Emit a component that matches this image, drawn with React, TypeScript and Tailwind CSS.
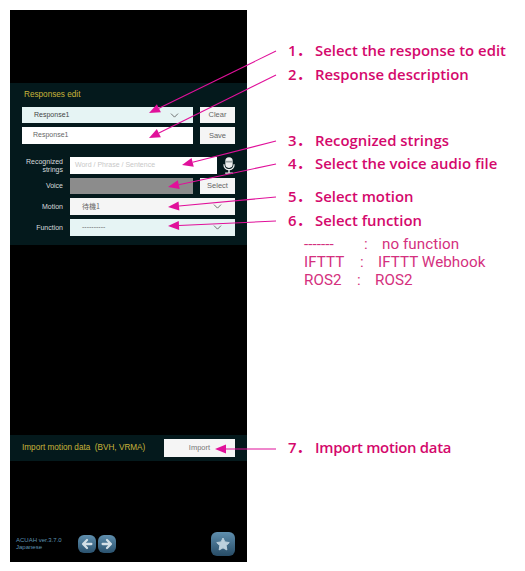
import { ChevronDown } from 'lucide-react';

const SANS = "font-['Liberation_Sans',Arial,sans-serif]";
const NOTE = "font-['Open_Sans','Noto_Sans_CJK_JP',sans-serif]";

function Chevron({ className = '' }: { className?: string }) {
  return <ChevronDown className={`w-[13px] h-[13px] text-[#555] ${className}`} strokeWidth={1.5} />;
}

function SideButton({ label }: { label: string }) {
  return (
    <button className="w-[35px] h-full bg-[#f5f5f5] text-[#666] text-[7.5px] flex items-center justify-center">
      {label}
    </button>
  );
}

function FieldLabel({ children }: { children: React.ReactNode }) {
  return (
    <div className="w-[41px] mr-[7px] text-right text-[7px] leading-[8px] text-[#d8dcdc]">{children}</div>
  );
}

function Note({ num, text, className = '' }: { num: string; text: string; className?: string }) {
  return (
    <div className={`flex items-center h-[20px] text-[14.9px] leading-[20px] font-semibold text-[#d4086c] whitespace-nowrap ${className}`}>
      <span className="w-[27px]">{num}．</span>
      <span>{text}</span>
    </div>
  );
}

function FunctionRow({ left, right, gap }: { left: string; right: string; gap: string }) {
  return (
    <div className="flex items-center h-[18px] font-['Roboto',sans-serif] text-[15.2px] leading-[18px] tracking-[0.05px] text-[#d4307e] whitespace-nowrap">
      <span className={gap}>{left}</span>
      <span className="w-[18px]">:</span>
      <span>{right}</span>
    </div>
  );
}

function NavButton({ dir }: { dir: 'left' | 'right' }) {
  return (
    <div className="w-[18px] h-[18px] rounded-[6px] bg-gradient-to-b from-[#5f8fae] to-[#2b526e] flex items-center justify-center">
      <svg viewBox="0 0 16 16" className="w-[14px] h-[14px]">
        <path
          d={dir === 'left' ? 'M13 8H4M8 3.5 3.5 8 8 12.5' : 'M3 8h9M8 3.5 12.5 8 8 12.5'}
          fill="none"
          stroke="#d3dfe6"
          strokeWidth="2.6"
          strokeLinecap="round"
          strokeLinejoin="round"
        />
      </svg>
    </div>
  );
}

const ARROWS: [number, number, number, number][] = [
  [276, 51, 149, 113],
  [276, 75, 149, 138],
  [276, 141, 182, 165],
  [276, 164, 168, 187],
  [276, 197, 168, 207],
  [276, 221, 168, 226],
  [276, 449, 215, 449],
];

function Arrow({ line }: { line: [number, number, number, number] }) {
  const [x1, y1, x2, y2] = line;
  const a = Math.atan2(y1 - y2, x1 - x2);
  const len = 11;
  const w = 4.5;
  const bx = x2 + Math.cos(a) * len;
  const by = y2 + Math.sin(a) * len;
  const px = -Math.sin(a) * w;
  const py = Math.cos(a) * w;
  return (
    <g>
      <line x1={x1} y1={y1} x2={bx} y2={by} stroke="#e0109a" strokeWidth="1.1" />
      <polygon points={`${x2},${y2} ${bx + px},${by + py} ${bx - px},${by - py}`} fill="#e0109a" />
    </g>
  );
}

export default function App() {
  return (
    <div className={`relative w-[525px] h-[571px] bg-white flex overflow-hidden ${SANS}`}>
      <div className="ml-[10px] mt-[10px] w-[237px] h-[552px] bg-black flex flex-col">
        <div className="mt-[73px] h-[162px] bg-[#04191c] pl-[12px] pr-[12px] flex flex-col">
          <div className="mt-[6px] h-[11px] ml-[2px] text-[8.2px] leading-[11px] text-[#c8b43a]">Responses edit</div>
          <div className="mt-[7px] h-[16px] flex gap-[7px]">
            <div className="w-[171px] h-full bg-[#e6f4f4] flex items-center pl-[12px] pr-[12px] text-[7px] text-[#444]">
              <span className="flex-1">Response1</span>
              <Chevron />
            </div>
            <SideButton label="Clear" />
          </div>
          <div className="mt-[4px] h-[17px] flex gap-[7px]">
            <div className="w-[171px] h-full bg-white flex items-center pl-[11px] text-[7px] text-[#666]">Response1</div>
            <SideButton label="Save" />
          </div>
          <div className="mt-[13px] h-[17px] flex items-center">
            <FieldLabel>
              Recognized
              <br />
              strings
            </FieldLabel>
            <div className="w-[147px] h-full bg-white flex items-center pl-[5px] text-[7px] text-[#c8c8c8]">
              Word / Phrase / Sentence
            </div>
            <svg viewBox="0 0 14 20" className="ml-[6px] w-[12px] h-[17px]">
              <rect x="2.7" y="0.3" width="8.6" height="12.5" rx="4.2" fill="#eef0f0" />
              <rect x="2.7" y="4.5" width="8.6" height="2" fill="#9aa3a3" />
              <path d="M1 8.500c0 4 2.700 6.400 6 6.400s6-2.400 6-6.400" fill="none" stroke="#eef0f0" strokeWidth="1.5" />
              <path d="M7 14.700V18.500M2.500 19h9" stroke="#eef0f0" strokeWidth="1.6" />
            </svg>
          </div>
          <div className="mt-[4px] h-[16px] flex items-center">
            <FieldLabel>Voice</FieldLabel>
            <div className="w-[123px] h-full bg-[#8c8c8c]" />
            <div className="ml-[7px] h-full">
              <SideButton label="Select" />
            </div>
          </div>
          <div className="mt-[4px] h-[17px] flex items-center">
            <FieldLabel>Motion</FieldLabel>
            <div className="w-[165px] h-full bg-[#f5f5f5] flex items-center pl-[12px] pr-[11px] text-[7px] text-[#666] font-['Noto_Sans_CJK_JP',sans-serif]">
              <span className="flex-1">待機1</span>
              <Chevron />
            </div>
          </div>
          <div className="mt-[4px] h-[17px] flex items-center">
            <FieldLabel>Function</FieldLabel>
            <div className="w-[165px] h-full bg-[#e6f4f4] flex items-center pl-[12px] pr-[11px] text-[7px] text-[#666]">
              <span className="flex-1">----------</span>
              <Chevron />
            </div>
          </div>
        </div>
        <div className="mt-[190px] h-[26px] bg-[#04191c] pl-[12px] pr-[12px] flex items-center justify-between">
          <span className="text-[8.2px] text-[#c8b43a] whitespace-pre">Import motion data  (BVH, VRMA)</span>
          <button className="w-[71px] h-[18px] bg-[#f5f5f5] text-[#777] text-[7.5px]">Import</button>
        </div>
        <div className="mt-[71px] flex items-center pl-[6px] pr-[12px]">
          <div className="w-[62px] text-[6px] leading-[7px] text-[#5f94b3]">
            ACUAH ver.3.7.0
            <br />
            Japanese
          </div>
          <div className="flex gap-[2px]">
            <NavButton dir="left" />
            <NavButton dir="right" />
          </div>
          <div className="ml-auto w-[24px] h-[24px] rounded-[6px] bg-gradient-to-b from-[#5f8fae] to-[#284c66] flex items-center justify-center">
            <svg viewBox="0 0 24 24" className="w-[16px] h-[16px]">
              <path
                d="M12 3l2.9 5.9 6.5.9-4.7 4.6 1.1 6.5L12 17.8 6.2 20.9l1.1-6.5L2.600 9.800l6.500-.9z"
                fill="#bcd0dc"
                stroke="#bcd0dc"
                strokeWidth="1.5"
                strokeLinejoin="round"
              />
            </svg>
          </div>
        </div>
      </div>

      <div className={`ml-[41px] pt-[40px] flex flex-col ${NOTE}`}>
        <Note num="1" text="Select the response to edit" />
        <Note num="2" text="Response description" className="mt-[4px]" />
        <Note num="3" text="Recognized strings" className="mt-[46px]" />
        <Note num="4" text="Select the voice audio file" className="mt-[3px]" />
        <Note num="5" text="Select motion" className="mt-[13px]" />
        <Note num="6" text="Select function" className="mt-[4px]" />
        <div className="ml-[16px] mt-[5px] flex flex-col">
          <FunctionRow left="-------" right="no function" gap="w-[60px]" />
          <FunctionRow left="IFTTT" right="IFTTT Webhook" gap="w-[56px]" />
          <FunctionRow left="ROS2" right="ROS2" gap="w-[53px]" />
        </div>
        <Note num="7" text="Import motion data" className="mt-[148px] tracking-[-0.3px]" />
      </div>

      <svg className="absolute inset-0 w-[525px] h-[571px] pointer-events-none" viewBox="0 0 525 571">
        {ARROWS.map((line, i) => (
          <Arrow key={i} line={line} />
        ))}
      </svg>
    </div>
  );
}
